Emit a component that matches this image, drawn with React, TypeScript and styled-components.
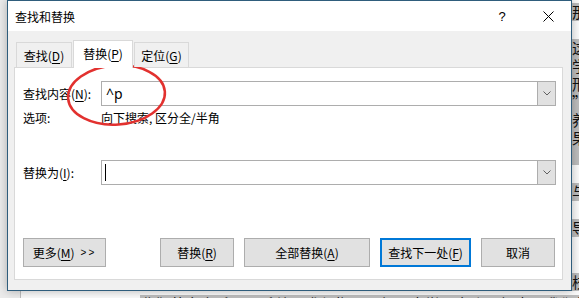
import React from "react";
import styled, { createGlobalStyle } from "styled-components";

const UI_FONT = `"Noto Sans CJK SC", "Noto Sans", sans-serif`;

const GlobalStyle = createGlobalStyle`
  html, body { margin: 0; padding: 0; background: #ebebeb; }
  body { font-family: ${UI_FONT}; }
`;

const Page = styled.div`
  position: relative;
  width: 579px;
  height: 298px;
  overflow: hidden;
  background: #ebebeb;
  display: grid;
  grid-template-rows: 291px 1fr;
  font-family: ${UI_FONT};
`;

const Backdrop = styled.div`
  display: flex;
  justify-content: flex-end;
`;

const RightStrip = styled.div`
  width: 7px;
  overflow: hidden;
  background: #fafafa;
  padding-top: 3px;
  display: flex;
  flex-direction: column;
`;

const StripLine = styled.div<{ $hl: boolean }>`
  height: 18px;
  line-height: 18px;
  font-size: 15px;
  color: #111;
  white-space: nowrap;
  background: ${(p) => (p.$hl ? "#bcbcbc" : "transparent")};
`;

const BottomStrip = styled.div`
  margin-left: 20px;
  border-left: 1px solid #bdbdbd;
  background: #fafafa;
  padding-left: 119px;
  overflow: hidden;
  white-space: nowrap;
`;

const BottomText = styled.span`
  display: inline-block;
  background: #bcbcbc;
  font-size: 15px;
  line-height: 18px;
  height: 18px;
  color: #111;
`;

const Dialog = styled.section`
  position: absolute;
  left: 7px;
  top: 0;
  width: 565px;
  height: 291px;
  box-sizing: border-box;
  border: 1px solid #2f5d7c;
  background: #f0f0f0;
  display: flex;
  flex-direction: column;
  box-shadow: 0 0 9px rgba(0, 0, 0, 0.28);
  font-family: ${UI_FONT};
  font-size: 12px;
  color: #000;
`;

const TitleBar = styled.header`
  height: 30px;
  flex-shrink: 0;
  background: #fff;
  display: flex;
  align-items: center;
  padding-left: 7px;
`;

const Title = styled.span`
  flex: 1;
  font-size: 12px;
`;

const CaptionButton = styled.div`
  width: 46px;
  height: 30px;
  display: flex;
  align-items: center;
  justify-content: center;
  font-family: "Liberation Sans", sans-serif;
  font-size: 13px;
`;

const Body = styled.div`
  flex: 1;
  display: flex;
  flex-direction: column;
  padding: 9px 0 0 6px;
`;

const TabRow = styled.div`
  position: relative;
  z-index: 1;
  height: 28px;
  display: flex;
  align-items: flex-end;
  padding-left: 2px;
`;

const Tab = styled.div<{ $active?: boolean; $w: number }>`
  box-sizing: border-box;
  width: ${(p) => p.$w}px;
  height: ${(p) => (p.$active ? 28 : 25)}px;
  margin-bottom: ${(p) => (p.$active ? 0 : 1)}px;
  margin-right: 1px;
  border: 1px solid #d9d9d9;
  border-bottom: none;
  background: ${(p) => (p.$active ? "#fff" : "#f0f0f0")};
  display: flex;
  align-items: center;
  justify-content: center;
  padding-bottom: ${(p) => (p.$active ? 2 : 0)}px;
  font-size: 12px;
`;

const Panel = styled.div`
  margin-top: -1px;
  width: 549px;
  height: 213px;
  box-sizing: border-box;
  background: #fff;
  border: 1px solid #d9d9d9;
  padding: 13px 6px 12px 8px;
  display: flex;
  flex-direction: column;
`;

const FieldRow = styled.div<{ $mt?: number }>`
  display: grid;
  grid-template-columns: 78px 1fr;
  align-items: center;
  margin-top: ${(p) => p.$mt ?? 0}px;
`;

const Label = styled.label`
  font-size: 12px;
  white-space: nowrap;
`;

const Key = styled.span`
  text-decoration: underline;
  text-underline-offset: 2px;
`;

const Combo = styled.div`
  height: 25px;
  box-sizing: border-box;
  border: 1px solid #adadad;
  background: #fff;
  display: flex;
`;

const ComboText = styled.div`
  flex: 1;
  display: flex;
  align-items: center;
  padding-left: 4px;
  font-family: "Noto Sans", sans-serif;
  font-size: 14px;
`;

const Caret = styled.span`
  width: 1px;
  height: 17px;
  background: #000;
  margin-left: -1px;
`;

const DropButton = styled.div`
  width: 17px;
  border-left: 1px solid #adadad;
  background: #e1e1e1;
  display: flex;
  align-items: center;
  justify-content: center;
`;

const OptionsRow = styled(FieldRow)`
  height: 16px;
  line-height: 16px;
`;

const ButtonRow = styled.div`
  margin-top: auto;
  display: flex;
  height: 29px;
  padding-right: 1px;
  gap: 10px;
`;

const Button = styled.div<{ $w: number; $primary?: boolean; $push?: boolean }>`
  box-sizing: border-box;
  width: ${(p) => p.$w}px;
  height: 29px;
  margin-left: ${(p) => (p.$push ? "auto" : "0")};
  border: ${(p) => (p.$primary ? "2px solid #0078d7" : "1px solid #adadad")};
  background: #e1e1e1;
  display: flex;
  align-items: center;
  justify-content: center;
  font-size: 12px;
  white-space: nowrap;
`;

const Arrows = styled.span`
  font-family: "Liberation Sans", sans-serif;
  font-size: 10px;
  letter-spacing: 2px;
  margin-left: 6px;
`;

const Annotation = styled.svg`
  position: absolute;
  left: 0;
  top: 0;
  pointer-events: none;
`;

const Chevron = () => (
  <svg width="8" height="5" viewBox="0 0 8 5">
    <path d="M0.5 0.5 L4 4 L7.5 0.5" fill="none" stroke="#606060" strokeWidth="1" />
  </svg>
);

const CloseIcon = () => (
  <svg width="11" height="11" viewBox="0 0 11 11">
    <path d="M0.5 0.5 L10.5 10.5 M10.5 0.5 L0.5 10.5" stroke="#000" strokeWidth="1" />
  </svg>
);

const stripLines: { ch: string; hl: boolean }[] = [
  { ch: "那", hl: true },
  { ch: "", hl: false },
  { ch: "这", hl: true },
  { ch: "学", hl: true },
  { ch: "形", hl: true },
  { ch: "”", hl: true },
  { ch: "养", hl: true },
  { ch: "果", hl: true },
  { ch: "", hl: true },
  { ch: "", hl: false },
  { ch: "与", hl: true },
  { ch: "", hl: false },
  { ch: "导", hl: true },
  { ch: "", hl: false },
  { ch: "", hl: false },
  { ch: "校", hl: true },
];

export default function App() {
  return (
    <Page>
      <GlobalStyle />
      <Backdrop>
        <RightStrip>
          {stripLines.map((l, i) => (
            <StripLine key={i} $hl={l.hl}>
              {l.ch || "\u00a0"}
            </StripLine>
          ))}
        </RightStrip>
      </Backdrop>
      <BottomStrip>
        <BottomText>费御英文米手，因毛幼要求与指导思想，事学习交账以报查，我们将，切实</BottomText>
      </BottomStrip>

      <Dialog>
        <TitleBar>
          <Title>查找和替换</Title>
          <CaptionButton>?</CaptionButton>
          <CaptionButton>
            <CloseIcon />
          </CaptionButton>
        </TitleBar>
        <Body>
          <TabRow>
            <Tab $w={56}>
              查找(<Key>D</Key>)
            </Tab>
            <Tab $w={60} $active>
              替换(<Key>P</Key>)
            </Tab>
            <Tab $w={55}>
              定位(<Key>G</Key>)
            </Tab>
          </TabRow>
          <Panel>
            <FieldRow>
              <Label>
                查找内容(<Key>N</Key>):
              </Label>
              <Combo>
                <ComboText>^p</ComboText>
                <DropButton>
                  <Chevron />
                </DropButton>
              </Combo>
            </FieldRow>
            <OptionsRow $mt={4}>
              <Label>选项:</Label>
              <span>向下搜索, 区分全/半角</span>
            </OptionsRow>
            <FieldRow $mt={34}>
              <Label>
                替换为(<Key>I</Key>):
              </Label>
              <Combo>
                <ComboText>
                  <Caret />
                </ComboText>
                <DropButton>
                  <Chevron />
                </DropButton>
              </Combo>
            </FieldRow>
            <ButtonRow>
              <Button $w={83}>
                更多(<Key>M</Key>)<Arrows>&gt;&gt;</Arrows>
              </Button>
              <Button $w={74} $push>
                替换(<Key>R</Key>)
              </Button>
              <Button $w={126}>
                全部替换(<Key>A</Key>)
              </Button>
              <Button $w={91} $primary>
                查找下一处(<Key>F</Key>)
              </Button>
              <Button $w={74}>取消</Button>
            </ButtonRow>
          </Panel>
        </Body>
      </Dialog>

      <Annotation width="579" height="298" viewBox="0 0 579 298">
        <ellipse
          cx="116.5"
          cy="95"
          rx="48.5"
          ry="29.5"
          transform="rotate(-4 116.5 95)"
          fill="none"
          stroke="#e2312f"
          strokeWidth="2.5"
        />
      </Annotation>
    </Page>
  );
}
